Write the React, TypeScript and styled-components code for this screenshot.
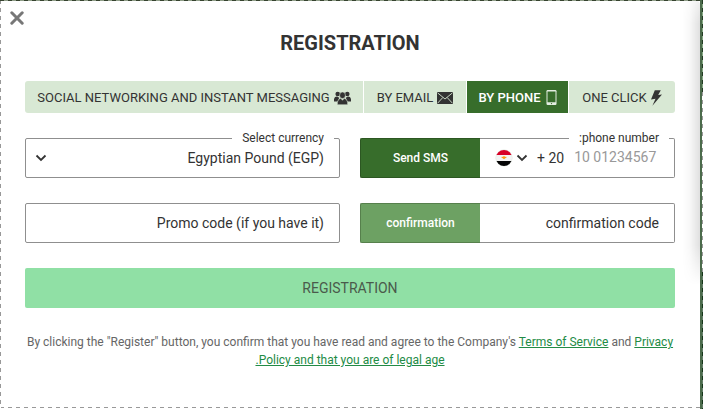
import React from "react";
import styled, { createGlobalStyle, css } from "styled-components";

const Global = createGlobalStyle`
  *, *::before, *::after { box-sizing: border-box; }
  html, body { margin: 0; overflow: hidden; background: #fff; }
  body { font-family: Roboto, sans-serif; color: #333; }
  button { font-family: inherit; border: 0; margin: 0; padding: 0; }
`;

const Page = styled.div`
  display: grid;
  grid-template-columns: 700px 3px;
  width: 703px;
  height: 409px;
  background: #fff;
`;

const Modal = styled.main`
  position: relative;
  display: flex;
  flex-direction: column;
  align-items: center;
  padding: 30px 25px 0;
  background: #fff;
`;

const Frame = styled.div`
  position: absolute;
  inset: 0 0 1px 0;
  pointer-events: none;
  background:
    repeating-linear-gradient(90deg, #36432f 0 4px, #8f9d88 4px 8px) 0 0 / 100% 1px no-repeat,
    repeating-linear-gradient(180deg, #999 0 4px, #fff 4px 8px) 0 0 / 1px 100% no-repeat,
    repeating-linear-gradient(90deg, #999 0 4px, #fff 4px 8px) 0 100% / 100% 1px no-repeat;
`;

const EdgeShade = styled.div`
  position: absolute;
  top: 1px;
  right: 0;
  width: 18px;
  height: 284px;
  border-radius: 0 3px 0 0;
  background: linear-gradient(90deg, rgba(0, 0, 0, 0), rgba(0, 0, 0, 0.03) 45%, rgba(0, 0, 0, 0.12));
  mask-image: linear-gradient(rgba(0, 0, 0, 0.5), #000 8%, #000 86%, transparent);
`;

const Backdrop = styled.aside`
  border-left: 2px solid #4b6b4b;
  background:
    repeating-linear-gradient(180deg, #233c24 0 4px, #87aa85 4px 8px) 0 0 / 1px 92px no-repeat,
    repeating-linear-gradient(180deg, #999 0 4px, #fff 4px 8px) 0 92px / 1px 180px no-repeat,
    repeating-linear-gradient(180deg, #16361a 0 4px, #66806a 4px 8px);
`;

const Close = styled.button`
  position: absolute;
  left: 10px;
  top: 11px;
  width: 14px;
  height: 14px;
  background: none;
  svg { display: block; }
`;

const Title = styled.h1`
  margin: 0;
  height: 51px;
  font-size: 20px;
  line-height: 27px;
  font-weight: 700;
  color: #333;
`;

const Tabs = styled.nav`
  display: grid;
  grid-template-columns: 338px 102px 101px 106px;
  gap: 1px;
  height: 32px;
  border-radius: 3px;
  overflow: hidden;
`;

const Tab = styled.button<{ $active?: boolean }>`
  display: flex;
  align-items: center;
  justify-content: center;
  gap: 4px;
  padding-top: 1px;
  font-size: 13px;
  line-height: 16px;
  white-space: nowrap;
  color: #333;
  background: #d8e8d4;
  ${(p) => p.$active && css`
    background: #376d2b;
    color: #fff;
    font-weight: 500;
    gap: 5px;
  `}
  svg { flex: none; }
`;

const Form = styled.div`
  display: grid;
  grid-template-columns: 315px 315px;
  grid-template-rows: 40px 40px 40px;
  gap: 25px 20px;
  margin-top: 25px;
`;

const Field = styled.div`
  position: relative;
  display: flex;
  align-items: center;
  justify-content: space-between;
  padding: 0 15px 0 9px;
  border: 1px solid #8f8f8f;
  border-radius: 2px;
  font-size: 14px;
  line-height: 20px;
`;

const Value = styled.span`
  margin-left: auto;
  white-space: nowrap;
`;

const Label = styled.span`
  position: absolute;
  top: -9px;
  right: 5px;
  padding: 0 10px;
  background: #fff;
  font-size: 12px;
  line-height: 16px;
  white-space: nowrap;
`;

const Group = styled.div`
  display: grid;
  grid-template-columns: 120px 195px;
`;

const Action = styled.button<{ $muted?: boolean }>`
  border: 1px solid ${(p) => (p.$muted ? "#56804c" : "#2c5722")};
  border-right: 0;
  border-radius: 2px 0 0 2px;
  background: ${(p) => (p.$muted ? "#6da163" : "#376d2b")};
  color: #fff;
  font-size: 12px;
  font-weight: 500;
`;

const GroupField = styled(Field)`
  border-left: 0;
  border-radius: 0 2px 2px 0;
`;

const PhoneField = styled(GroupField)`
  justify-content: flex-start;
  padding: 0 0 0 15px;
`;

const Country = styled.span`
  display: flex;
  align-items: center;
  gap: 3px;
`;

const Prefix = styled.span`
  margin-left: 9px;
  white-space: nowrap;
`;

const Placeholder = styled.span`
  margin: -2px 0 0 10px;
  color: #999;
  white-space: nowrap;
`;

const Submit = styled.button`
  grid-column: 1 / -1;
  border-radius: 2px;
  background: #90e0a5;
  color: #4a5a4b;
  font-size: 14px;
`;

const Terms = styled.p`
  width: 660px;
  margin: 25px 0 0;
  text-align: center;
  font-size: 12px;
  line-height: 18px;
  color: #666;
  white-space: nowrap;
  a { color: #228b45; text-decoration: underline; }
`;

const Chevron = () => (
  <svg width="12" height="8" viewBox="0 0 12 8" fill="none" stroke="#333" strokeWidth="1.8">
    <path d="M1.500 1.500 6 6l4.500-4.500" />
  </svg>
);

const People = () => (
  <svg width="17" height="14" viewBox="0 0 17 14" fill="#333">
    <circle cx="3.700" cy="3" r="2.300" />
    <circle cx="13.300" cy="3" r="2.300" />
    <path d="M0 10.500V8.500Q.3 5.700 3 5.500l2.300 1.300-1.800 3.700zM17 10.500V8.500q-.3-2.800-3-3l-2.300 1.300 1.800 3.700z" />
    <ellipse cx="8.500" cy="4.300" rx="2.900" ry="3.300" stroke="#d8e8d4" strokeWidth=".5" />
    <path d="M3.400 13.700v-2.500Q4 8 6.700 7.300l1.800 2 1.800-2q2.700.7 3.300 3.900v2.500z" stroke="#d8e8d4" strokeWidth=".5" />
  </svg>
);

const Envelope = () => (
  <svg width="16" height="12" viewBox="0 0 16 12" fill="none">
    <path d="M0 0h16v12H0z" fill="#333" />
    <path d="m.5.8 7.500 6.200L15.500.8M.5 11.300l5.300-5.800M15.500 11.300l-5.300-5.800" stroke="#d8e8d4" strokeWidth=".9" />
  </svg>
);

const Phone = () => (
  <svg width="11" height="15" viewBox="0 0 11 15">
    <rect x=".5" width="10" height="15" rx="1.200" fill="#e5eee2" />
    <path d="M1.500 1.500h8v10.800h-8z" fill="#376d2b" />
    <circle cx="5.500" cy="13.600" r=".7" fill="#376d2b" />
  </svg>
);

const Bolt = () => (
  <svg width="11" height="16" viewBox="0 0 11 16" fill="#333">
    <path d="M3.800.3h6L7.200 5l3.800-.5-9.600 11.200 3.100-6.900-4.500.8z" />
  </svg>
);

const Flag = () => (
  <svg width="18" height="18" viewBox="0 0 18 18">
    <defs><clipPath id="flag-circle"><circle cx="9" cy="9" r="8" /></clipPath></defs>
    <circle cx="9" cy="9" r="8.500" fill="#dfe5dc" />
    <g clipPath="url(#flag-circle)">
      <path d="M0 0h18v18H0z" fill="#f3f3f3" />
      <path d="M0 0h18v6H0z" fill="#d80027" />
      <path d="M0 12h18v6H0z" fill="#050505" />
      <path d="m6 8 2-.2 1-.7 1 .7 2 .2-1.700 1.200L9 10.300 7.700 9.200z" fill="#ff9811" />
    </g>
  </svg>
);

export default function App() {
  return (
    <>
      <Global />
      <Page>
        <Modal>
          <EdgeShade />
          <Frame />
          <Close aria-label="Close">
            <svg width="14" height="14" viewBox="0 0 14 14" stroke="#777" strokeWidth="3" strokeLinecap="round">
              <path d="m1.800 1.800 10.400 10.400M12.200 1.800 1.800 12.200" />
            </svg>
          </Close>
          <Title>REGISTRATION</Title>
          <Tabs>
            <Tab>SOCIAL NETWORKING AND INSTANT MESSAGING <People /></Tab>
            <Tab>BY EMAIL <Envelope /></Tab>
            <Tab $active>BY PHONE <Phone /></Tab>
            <Tab>ONE CLICK <Bolt /></Tab>
          </Tabs>
          <Form>
            <Field>
              <Label>Select currency</Label>
              <Chevron />
              <Value>Egyptian Pound (EGP)</Value>
            </Field>
            <Group>
              <Action>Send SMS</Action>
              <PhoneField>
                <Label>:phone number</Label>
                <Country><Flag /><Chevron /></Country>
                <Prefix>+ 20</Prefix>
                <Placeholder>10 01234567</Placeholder>
              </PhoneField>
            </Group>
            <Field><Value>Promo code (if you have it)</Value></Field>
            <Group>
              <Action $muted>confirmation</Action>
              <GroupField><Value>confirmation code</Value></GroupField>
            </Group>
            <Submit>REGISTRATION</Submit>
          </Form>
          <Terms>
            By clicking the "Register" button, you confirm that you have read and agree to the Company's <a>Terms of Service</a> and <a>Privacy<br />.Policy and that you are of legal age</a>
          </Terms>
        </Modal>
        <Backdrop />
      </Page>
    </>
  );
}
